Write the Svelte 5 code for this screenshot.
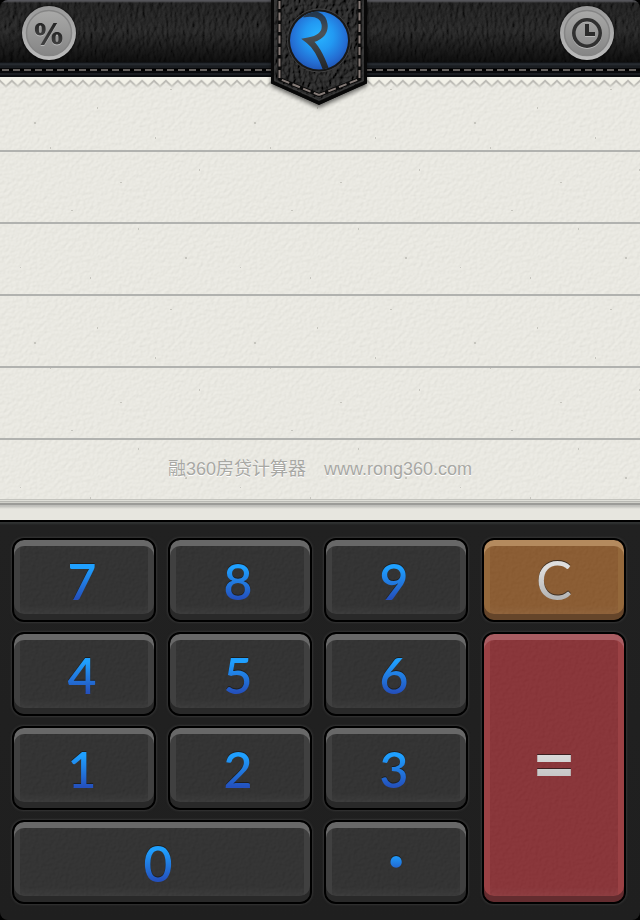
<script>
  const digits = ['7', '8', '9', '4', '5', '6', '1', '2', '3', '0', '•'];
  let entry = $state('');

  function press(key) {
    const mark = key === '•' ? '.' : key;
    if (mark === '.' && entry.includes('.')) return;
    if (entry.length < 14) entry += mark;
  }

  function total() {
    if (entry) entry = String(Number(entry));
  }
</script>

<svelte:head><title>融360房贷计算器</title></svelte:head>

<main class="app">
  <header class="bar">
    <button class="round" aria-label="Rates">
      <svg viewBox="0 0 54 54" width="54" height="54" aria-hidden="true">
        <defs>
          <linearGradient id="rim" x1="0" y1="0" x2="0" y2="1">
            <stop offset="0" stop-color="#999" /><stop offset="1" stop-color="#bcbcbc" />
          </linearGradient>
          <linearGradient id="face" x1="0" y1="0" x2="0" y2="1">
            <stop offset="0" stop-color="#a9a9a8" /><stop offset="1" stop-color="#858585" />
          </linearGradient>
          <linearGradient id="ink" x1="0" y1="0" x2="0" y2="1">
            <stop offset="0" stop-color="#242424" /><stop offset="1" stop-color="#414141" />
          </linearGradient>
          <g id="percent" fill-rule="evenodd">
            <path d="M18.300 17C21.800 17 23.700 19.300 23.700 23.200S21.800 29.400 18.300 29.400S12.900 27.100 12.900 23.200S14.800 17 18.300 17ZM18.300 19.400C17.100 19.400 16.900 20.500 16.900 23.200S17.100 27 18.300 27S19.700 25.900 19.700 23.200S19.500 19.400 18.300 19.400Z" />
            <path d="M35 26C38.500 26 40.400 28.300 40.400 32.200S38.500 38.400 35 38.400S29.600 36.100 29.600 32.200S31.500 26 35 26ZM35 28.400C33.800 28.400 33.600 29.500 33.600 32.200S33.800 36 35 36S36.400 34.900 36.400 32.200S36.200 28.400 35 28.400Z" />
            <path d="M31.500 17H35.200L22.200 39H18.500Z" />
          </g>
        </defs>
        <circle cx="27" cy="27" r="27" fill="url(#rim)" />
        <circle cx="27" cy="27" r="22.5" fill="url(#face)" stroke="#858585" stroke-width="1.5" />
        <use href="#percent" y="1" fill="#b9b9b9" />
        <use href="#percent" fill="url(#ink)" />
      </svg>
    </button>

    <button class="round" aria-label="History">
      <svg viewBox="0 0 54 54" width="54" height="54" aria-hidden="true">
        <circle cx="27" cy="27" r="27" fill="url(#rim)" />
        <circle cx="27" cy="27" r="22.5" fill="url(#face)" stroke="#858585" stroke-width="1.5" />
        <circle cx="27" cy="28" r="13.4" fill="none" stroke="#b6b6b6" stroke-width="3.2" />
        <circle cx="27" cy="27" r="13.2" fill="none" stroke="#303030" stroke-width="3.6" />
        <path d="M25 19h4v8h6v4H25z" fill="#b8b8b8" />
        <path d="M25 18h4v8h6v4H25z" fill="#2b2b2b" />
      </svg>
    </button>

    <svg class="badge" viewBox="0 0 108 116" width="108" height="116" aria-hidden="true">
      <defs>
        <radialGradient id="orb" cx=".5" cy=".42" r=".62">
          <stop offset="0" stop-color="#28b4ff" /><stop offset=".4" stop-color="#2299f2" />
          <stop offset=".75" stop-color="#246fd4" /><stop offset="1" stop-color="#2150ae" />
        </radialGradient>
        <linearGradient id="ribbon" x1="0" y1="0" x2="0" y2="1">
          <stop offset="0" stop-color="#24384d" /><stop offset=".35" stop-color="#4c5358" /><stop offset="1" stop-color="#202326" />
        </linearGradient>
        <filter id="hide" x="0" y="0" width="1" height="1">
          <feTurbulence type="fractalNoise" baseFrequency=".26 .18" numOctaves="3" seed="8" />
          <feColorMatrix values="0 0 0 0 0  0 0 0 0 0  0 0 0 0 0  1 0 0 0 0" />
          <feDiffuseLighting surfaceScale="3" lighting-color="#393939">
            <feDistantLight azimuth="210" elevation="42" />
          </feDiffuseLighting>
          <feComposite in2="SourceGraphic" operator="in" />
        </filter>
        <filter id="drop" x="-.2" y="-.2" width="1.4" height="1.4"><feGaussianBlur stdDeviation="2" /></filter>
        <clipPath id="lens"><circle cx="54" cy="40.5" r="29" /></clipPath>
      </defs>
      <path d="M6 0H102V86L54 108L6 86Z" fill="#000" opacity=".55" filter="url(#drop)" />
      <path d="M6 0H102V83L54 105L6 83Z" fill="#101010" />
      <path d="M9 0H99V81L54 101L9 81Z" fill="#262626" filter="url(#hide)" />
      <path d="M7.5 0V82.5L54 103L100.5 82.5V0" fill="none" stroke="#080808" stroke-width="3" />
      <path d="M10 0V80.5L54 100L98 80.5V0" fill="none" stroke="#3a3a3a" />
      <path d="M14.5 0V79L54 95L94.5 79V0" fill="none" stroke="#0a0a0a" stroke-width="4" />
      <path d="M14.5 1V79L54 95" fill="none" stroke="#857b77" stroke-width="2" stroke-dasharray="8 3.5" />
      <path d="M94.5 1V79L54 95" fill="none" stroke="#857b77" stroke-width="2" stroke-dasharray="8 3.5" />
      <circle cx="54" cy="40.5" r="31.5" fill="#181818" stroke="#414141" />
      <circle cx="54" cy="40.5" r="29" fill="url(#orb)" />
      <path clip-path="url(#lens)" d="M38 14.500C50 12.500 58 15 59.500 24C61 33 54 38.500 43.500 40.500C51 46 57 58 61.500 71" fill="none" stroke="url(#ribbon)" stroke-width="6" stroke-linejoin="miter" />
    </svg>
  </header>

  <section class="paper" aria-label="Notepad">
    <svg class="teeth" width="100%" height="12" aria-hidden="true">
      <defs>
        <linearGradient id="fold" x1="0" y1="0" x2="0" y2="1">
          <stop offset="0" stop-color="#aaa9a4" /><stop offset=".5" stop-color="#b2b1ab" /><stop offset="1" stop-color="#d8d7d0" />
        </linearGradient>
        <pattern id="zig" width="11.85" height="12" patternUnits="userSpaceOnUse">
          <path d="M0 5L5.9 11L11.85 5V2H0Z" fill="url(#fold)" opacity=".8" />
          <path d="M0 2.5L5.9 8L11.85 2.5V0H0Z" fill="#f2f1e8" />
        </pattern>
      </defs>
      <rect width="100%" height="12" fill="url(#zig)" />
    </svg>
    <output class="value">{entry}</output>
    <p class="credit"><span>融360房贷计算器</span><a href="http://www.rong360.com">www.rong360.com</a></p>
  </section>

  <section class="pad" aria-label="Keypad">
    <div class="digits">
      {#each digits as key}
        <button class="key" class:wide={key === '0'} class:dot={key === '•'} onclick={() => press(key)}><span>{key}</span></button>
      {/each}
    </div>
    <div class="actions">
      <button class="key clear" onclick={() => (entry = '')}><span>C</span></button>
      <button class="key equals" onclick={total}><span>=</span></button>
    </div>
  </section>
</main>

<style>
  :global(body) { margin: 0; background: #000; }
  .app {
    display: flex;
    flex-direction: column;
    min-height: 100vh;
    font-family: "Liberation Sans", "Noto Sans CJK SC", sans-serif;
  }
  button { border: 0; padding: 0; margin: 0; cursor: pointer; }

  .bar {
    position: relative;
    z-index: 1;
    display: flex;
    justify-content: space-between;
    box-sizing: border-box;
    height: 77px;
    padding: 6px 26px 0 22px;
    border-radius: 8px 8px 0 0;
    background:
      linear-gradient(#0b0d10, #0b0d10) 0 100% / 100% 2px no-repeat,
      repeating-linear-gradient(90deg, #000 0 2px, #64605d 2px 9px, #000 9px 11px) 0 69px / 100% 2px no-repeat,
      linear-gradient(#08090b, #08090b) 0 68px / 100% 5px no-repeat,
      linear-gradient(#090a0c, #2a2f35 2px, #1a1d21 4px, #1b1e22) 0 62px / 100% 15px no-repeat,
      linear-gradient(#55555a 0 1px, #0002 3px, #0000 50%, #000a) 0 0 / 100% 62px no-repeat,
      url("data:image/svg+xml,%3Csvg xmlns='http://www.w3.org/2000/svg' width='320' height='80'%3E%3Cfilter id='n' x='0' y='0' width='1' height='1'%3E%3CfeTurbulence type='fractalNoise' baseFrequency='.25 .14' numOctaves='3' seed='4' stitchTiles='stitch'/%3E%3CfeColorMatrix values='0 0 0 0 0  0 0 0 0 0  0 0 0 0 0  1 0 0 0 0'/%3E%3CfeDiffuseLighting surfaceScale='1.8' lighting-color='%23333333'%3E%3CfeDistantLight azimuth='200' elevation='45'/%3E%3C/feDiffuseLighting%3E%3C/filter%3E%3Crect width='320' height='80' filter='url(%23n)'/%3E%3C/svg%3E");
  }
  .round { width: 54px; height: 54px; border-radius: 50%; background: none; box-shadow: 0 0 3px #000; }
  .round svg { display: block; }
  .badge { position: absolute; top: 0; left: 50%; margin-left: -55px; pointer-events: none; }

  .paper {
    display: flex;
    flex-direction: column;
    flex: 1;
    min-height: 443px;
    box-sizing: border-box;
    padding-bottom: 37px;
    background:
      linear-gradient(#c3c3bd 0 1px, #dfdfd8 1px 2px, #b9b9b3 2px 3px, #d0d0c9 3px 4px, #9c9c98 4px 6px, #bebeb9 6px 7px, #e8e7e100) 0 calc(100% - 11px) / 100% 10px no-repeat,
      linear-gradient(#e7e6df, #e7e6df) 0 100% / 100% 21px no-repeat,
      linear-gradient(#b1b2af 0 2px, #b1b2af00 2px) 0 73px / 100% 72px,
      url("data:image/svg+xml,%3Csvg xmlns='http://www.w3.org/2000/svg' width='220' height='220'%3E%3Cfilter id='n' x='0' y='0' width='1' height='1'%3E%3CfeTurbulence type='fractalNoise' baseFrequency='.28' numOctaves='3' seed='12' stitchTiles='stitch'/%3E%3CfeDiffuseLighting surfaceScale='.35' lighting-color='%23f1f0e9'%3E%3CfeDistantLight azimuth='225' elevation='68'/%3E%3C/feDiffuseLighting%3E%3C/filter%3E%3Crect width='220' height='220' filter='url(%23n)'/%3E%3Cg fill='%23c6c5be'%3E%3Cpath d='M50 70h1v2h-1zM97 30h1v2h-1zM170 12h2v1h-2zM138 151h1v2h-1zM20 190h1v1h-1zM199 92h1v2h-1zM71 133h2v1h-2zM34 45h2v2h-2zM120 105h2v1h-2zM155 60h1v2h-1zM185 180h2v2h-2zM90 200h1v2h-1z'/%3E%3C/g%3E%3C/svg%3E");
  }
  .teeth { display: block; }
  .value {
    flex: 1;
    padding: 16px 24px;
    text-align: right;
    font-size: 40px;
    line-height: 44px;
    color: #555;
  }
  .credit {
    display: flex;
    justify-content: center;
    gap: 18px;
    margin: 0;
    font-size: 18px;
    line-height: 28px;
    color: #a8a8a4;
    text-shadow: 0 1px #fff;
  }
  .credit a { color: inherit; text-decoration: none; }

  .pad {
    display: grid;
    grid-template-columns: 19fr 6fr;
    gap: 14px;
    padding: 16px 14px 16px 12px;
    border-top: 2px solid #000;
    border-radius: 0 0 8px 8px;
    background: linear-gradient(#303232 0 1px, #212121 3px, #1f1f1f);
  }
  .digits { display: grid; grid-template-columns: repeat(3, 1fr); grid-auto-rows: 84px; gap: 10px 12px; }
  .actions { display: grid; grid-template-rows: 84px 1fr; gap: 10px; }

  .key {
    --grain: url("data:image/svg+xml,%3Csvg xmlns='http://www.w3.org/2000/svg' width='160' height='160'%3E%3Cfilter id='n' x='0' y='0' width='1' height='1'%3E%3CfeTurbulence type='fractalNoise' baseFrequency='.3' numOctaves='3' seed='3' stitchTiles='stitch'/%3E%3CfeColorMatrix values='0 0 0 0 0  0 0 0 0 0  0 0 0 0 0  1 0 0 0 0'/%3E%3CfeDiffuseLighting surfaceScale='1' lighting-color='%23aaaaaa'%3E%3CfeDistantLight azimuth='225' elevation='45'/%3E%3C/feDiffuseLighting%3E%3C/filter%3E%3Crect width='160' height='160' opacity='.11' filter='url(%23n)'/%3E%3C/svg%3E");
    --top: #686868;
    --side: #404040;
    --foot: #292929;
    --base: #292929;
    --from: #1fa0ff;
    --to: #2451bd;
    display: flex;
    align-items: center;
    justify-content: center;
    box-sizing: border-box;
    min-width: 0;
    padding-right: 4px;
    border: 2px solid #000;
    border-radius: 12px;
    background: var(--grain), var(--base);
    box-shadow:
      0 0 2px 1px #343434,
      inset 0 6px var(--top),
      inset 0 -6px var(--foot),
      inset 6px 0 var(--side),
      inset -6px 0 var(--side),
      inset 0 -14px 8px -4px #ffffff0c;
    font-family: Lato, sans-serif;
    font-size: 50px;
    line-height: 60px;
    font-weight: 600;
  }
  .key span {
    padding-top: 2px;
    background: linear-gradient(var(--from) 30%, var(--to) 80%);
    background-clip: text;
    -webkit-background-clip: text;
    color: transparent;
    filter: drop-shadow(0 -1px 0 #151515aa);
  }
  .key:active { filter: brightness(.85); }
  .wide { grid-column: span 2; padding-right: 8px; }
  .dot { padding-right: 0; font-size: 28px; line-height: 32px; }
  .dot span { padding: 0 0 4px; }
  .clear, .equals { --from: #dedede; --to: #b5b5b5; padding-right: 0; }
  .clear { --top: #b48a5e; --side: #94683b; --foot: #65452a; --base: #8b5729; font-size: 54px; font-weight: 400; }
  .clear span { padding: 0; }
  .equals { --top: #a95d62; --side: #9a4144; --foot: #632c2f; --base: #882b2f; font-size: 76px; line-height: 84px; font-weight: 700; }
  .equals span { padding: 0 0 10px; }
</style>
